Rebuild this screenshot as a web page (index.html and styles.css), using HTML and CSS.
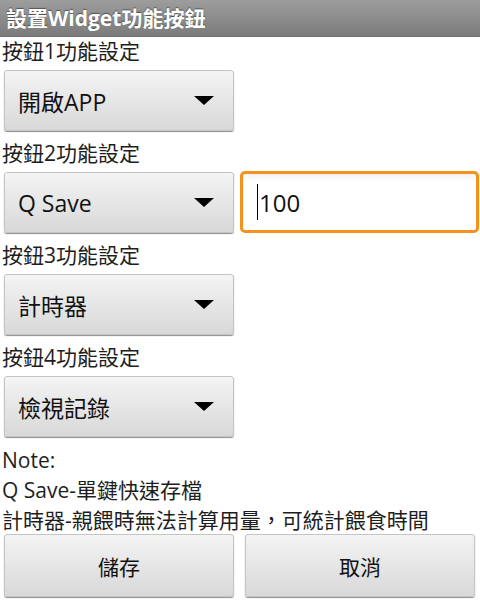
FILE: index.html
```html
<!DOCTYPE html>
<html lang="zh-Hant">
<head>
    <meta charset="UTF-8">
    <meta name="viewport" content="width=device-width, initial-scale=1.0">
    <title>設置Widget功能按鈕</title>
    <link rel="stylesheet" href="styles.css">
</head>
<body>

    <div class="title-bar">設置<b>Widget</b>功能按鈕</div>

    <div class="group">
        <div class="label">按鈕1功能設定</div>
        <div class="row">
            <div class="spinner"><span>開啟APP</span><i class="arrow"></i></div>
        </div>
    </div>

    <div class="group">
        <div class="label">按鈕2功能設定</div>
        <div class="row">
            <div class="spinner"><span>Q Save</span><i class="arrow"></i></div>
            <div class="edit"><i class="cursor"></i>100</div>
        </div>
    </div>

    <div class="group">
        <div class="label">按鈕3功能設定</div>
        <div class="row">
            <div class="spinner"><span>計時器</span><i class="arrow"></i></div>
        </div>
    </div>

    <div class="group">
        <div class="label">按鈕4功能設定</div>
        <div class="row">
            <div class="spinner"><span>檢視記錄</span><i class="arrow"></i></div>
        </div>
    </div>

    <div class="note">
        <p>Note:</p>
        <p>Q Save-單鍵快速存檔</p>
        <p>計時器-親餵時無法計算用量，可統計餵食時間</p>
    </div>

    <div class="actions">
        <button class="btn btn-save">儲存</button>
        <button class="btn btn-cancel">取消</button>
    </div>

</body>
</html>
```

FILE: styles.css
```css
body {
    margin: 0;
    width: 480px;
    height: 601px;
    overflow: hidden;
    background-color: #fff;
    color: #1e1e1e;
    font-family: "Open Sans", "Noto Sans CJK TC", sans-serif;
    font-size: 21px;
}
.title-bar {
    height: 37px;
    line-height: 36px;
    padding-left: 6px;
    box-sizing: border-box;
    background: linear-gradient(to bottom, #9d9d9d, #7b7b7b);
    border-bottom: 1px solid #6f6f6f;
    color: #fff;
    font-weight: bold;
    text-shadow: 0 -1px 1px rgba(0, 0, 0, 0.45);
}
.title-bar b {
    font-weight: bold;
}
.label {
    height: 29px;
    line-height: 29px;
    padding-left: 2px;
}
.row {
    display: flex;
    margin: 4px 0 8px 0;
}
.spinner {
    width: 230px;
    height: 61px;
    margin-left: 4px;
    box-sizing: border-box;
    display: flex;
    align-items: center;
    justify-content: space-between;
    padding: 0 19px 0 13px;
    border: 1px solid #c4c4c4;
    border-radius: 3px;
    background: linear-gradient(to bottom, #f4f4f4, #d8d8d8);
    box-shadow: 0 1px 1px rgba(0, 0, 0, 0.45);
    font-size: 23px;
    color: #111;
}
.arrow {
    width: 0;
    height: 0;
    border-left: 10px solid transparent;
    border-right: 10px solid transparent;
    border-top: 9px solid #000;
}
.edit {
    width: 239px;
    height: 62px;
    margin: -1px 0 0 6px;
    box-sizing: border-box;
    display: flex;
    align-items: center;
    padding-left: 14px;
    border: 3px solid #f5921e;
    border-radius: 5px;
    background: linear-gradient(to bottom, #f2f2f2, #fff 8px);
    font-size: 24px;
    color: #111;
}
.cursor {
    display: inline-block;
    width: 1px;
    height: 36px;
    background: #000;
    margin-right: 1px;
}
.note {
    padding-left: 2px;
}
.note p {
    margin: 0;
    line-height: 30px;
}
.actions {
    display: flex;
    margin-top: -1px;
}
.btn {
    width: 230px;
    height: 63px;
    padding: 0;
    border: 1px solid #c4c4c4;
    border-radius: 3px;
    background: linear-gradient(to bottom, #f4f4f4, #d8d8d8);
    box-shadow: 0 1px 1px rgba(0, 0, 0, 0.45);
    font-family: "Open Sans", "Noto Sans CJK TC", sans-serif;
    font-size: 21px;
    color: #111;
}
.btn-save {
    margin-left: 4px;
}
.btn-cancel {
    margin-left: 11px;
}
```
